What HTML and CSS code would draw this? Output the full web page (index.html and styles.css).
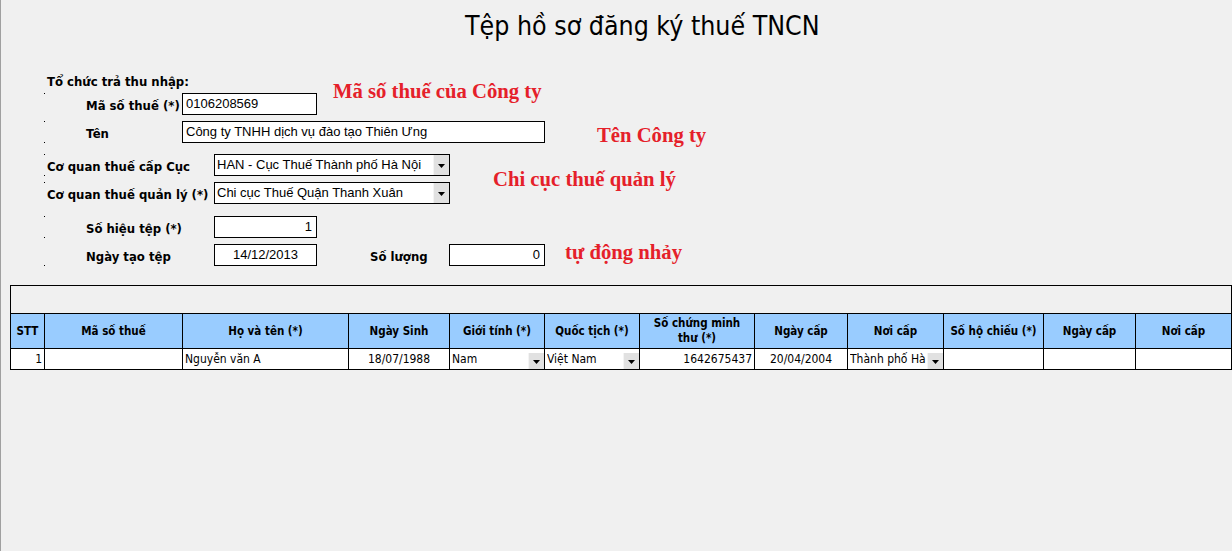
FILE: index.html
```html
<!DOCTYPE html>
<html lang="vi">
<head>
<meta charset="utf-8">
<title>Tệp hồ sơ đăng ký thuế TNCN</title>
<link rel="stylesheet" href="styles.css">
</head>
<body>
<div class="page">
  <h1 class="title">Tệp hồ sơ đăng ký thuế TNCN</h1>

  <div class="form">
    <div class="group-label">Tổ chức trả thu nhập:</div>

    <div class="row row-b dot-top">
      <span class="label sub lw-a">Mã số thuế (*)</span>
      <div class="field fw-mst">0106208569</div>
      <span class="note note-b">Mã số thuế của Công ty</span>
    </div>

    <div class="row row-c dot-top dot-bottom">
      <span class="label sub lw-a">Tên</span>
      <div class="field fw-ten">Công ty TNHH dịch vụ đào tạo Thiên Ưng</div>
      <span class="note note-c">Tên Công ty</span>
    </div>

    <div class="pair">
      <div class="pair-rows">
        <div class="row row-d dot-top dot-bottom">
          <span class="label lw-b">Cơ quan thuế cấp Cục</span>
          <div class="field select fw-sel">
            <span class="val">HAN - Cục Thuế Thành phố Hà Nội</span>
            <span class="btn"><svg width="7" height="4" viewBox="0 0 7 4"><path d="M0 0h7L3.5 4z"/></svg></span>
          </div>
        </div>
        <div class="row row-e dot-top">
          <span class="label lw-b">Cơ quan thuế quản lý (*)</span>
          <div class="field select fw-sel">
            <span class="val">Chi cục Thuế Quận Thanh Xuân</span>
            <span class="btn"><svg width="7" height="4" viewBox="0 0 7 4"><path d="M0 0h7L3.5 4z"/></svg></span>
          </div>
        </div>
      </div>
      <span class="note note-de">Chi cục thuế quản lý</span>
    </div>

    <div class="row row-f dot-top dot-bottom">
      <span class="label sub lw-b">Số hiệu tệp (*)</span>
      <div class="field fw-short right">1</div>
    </div>

    <div class="row row-g dot-bottom">
      <span class="label sub lw-b">Ngày tạo tệp</span>
      <div class="field fw-short center">14/12/2013</div>
      <span class="label lw-sl">Số lượng</span>
      <div class="field fw-sl right">0</div>
      <span class="note note-g">tự động nhảy</span>
    </div>
  </div>

  <div class="grid-box">
    <div class="strip"></div>
    <table class="grid">
      <thead>
        <tr>
          <th class="c1">STT</th>
          <th class="c2">Mã số thuế</th>
          <th class="c3">Họ và tên (*)</th>
          <th class="c4">Ngày Sinh</th>
          <th class="c5">Giới tính (*)</th>
          <th class="c6">Quốc tịch (*)</th>
          <th class="c7">Số chứng minh<br>thư (*)</th>
          <th class="c8">Ngày cấp</th>
          <th class="c9">Nơi cấp</th>
          <th class="c10">Số hộ chiếu (*)</th>
          <th class="c11">Ngày cấp</th>
          <th class="c12">Nơi cấp</th>
        </tr>
      </thead>
      <tbody>
        <tr>
          <td class="right">1</td>
          <td></td>
          <td>Nguyễn văn A</td>
          <td class="center">18/07/1988</td>
          <td><div class="dd"><span class="dd-val">Nam</span><span class="dd-btn"><svg width="7" height="4" viewBox="0 0 7 4"><path d="M0 0h7L3.5 4z"/></svg></span></div></td>
          <td><div class="dd"><span class="dd-val">Việt Nam</span><span class="dd-btn"><svg width="7" height="4" viewBox="0 0 7 4"><path d="M0 0h7L3.5 4z"/></svg></span></div></td>
          <td class="right">1642675437</td>
          <td class="center">20/04/2004</td>
          <td><div class="dd"><span class="dd-val">Thành phố Hà</span><span class="dd-btn"><svg width="7" height="4" viewBox="0 0 7 4"><path d="M0 0h7L3.5 4z"/></svg></span></div></td>
          <td></td>
          <td></td>
          <td></td>
        </tr>
      </tbody>
    </table>
  </div>
</div>
</body>
</html>
```

FILE: styles.css
```css
html, body {
  margin: 0;
  padding: 0;
  background: #f0f0f0;
}

body {
  font-family: "DejaVu Sans Condensed", "DejaVu Sans", sans-serif;
  font-stretch: condensed;
  color: #000;
}

.page {
  box-sizing: border-box;
  min-height: 551px;
  border-left: 1px solid #a0a0a0;
  overflow: hidden;
}

.title {
  margin: 0;
  height: 52px;
  line-height: 52px;
  padding-left: 464px;
  font-size: 26.5px;
  font-weight: normal;
  white-space: nowrap;
}

.form {
  padding: 22px 0 0 46px;
}

.group-label {
  height: 16px;
  line-height: 16px;
  font-size: 13px;
  font-weight: bold;
}

.row {
  position: relative;
  display: flex;
  align-items: center;
  height: 22px;
}

.dot-top::before,
.dot-bottom::after {
  content: "";
  position: absolute;
  left: -3px;
  width: 1px;
  height: 1px;
  background: #000;
}
.dot-top::before { top: 0; }
.dot-bottom::after { bottom: 0; }

.row-b { margin-top: 3px; }
.row-c { margin-top: 6px; }
.pair { margin-top: 11px; display: flex; align-items: center; }
.row-e { margin-top: 6px; }
.row-f { margin-top: 12px; }
.row-g { margin-top: 6px; }

.label {
  flex: none;
  box-sizing: border-box;
  padding-top: 3px;
  font-size: 13px;
  font-weight: bold;
  white-space: nowrap;
}
.sub { padding-left: 39px; }
.lw-a { width: 135px; }
.lw-b { width: 167px; }
.lw-sl { width: 132px; padding-left: 53px; }

.field {
  flex: none;
  box-sizing: border-box;
  height: 22px;
  border: 1px solid #000;
  background: #fff;
  padding: 0 3px;
  font-family: "Liberation Sans", Arial, sans-serif;
  font-stretch: normal;
  font-size: 13px;
  line-height: 20px;
  white-space: nowrap;
  overflow: hidden;
}
.field.right { text-align: right; padding-right: 4px; }
.field.center { text-align: center; }

.fw-mst { width: 135px; }
.fw-ten { width: 363px; }
.fw-sel { width: 236px; }
.fw-short { width: 103px; }
.fw-sl { width: 96px; }

.select {
  display: flex;
  padding: 0 0 0 2px;
}
.select .val {
  flex: 1;
  overflow: hidden;
}
.select .btn,
.dd-btn {
  flex: none;
  display: flex;
  align-items: center;
  justify-content: center;
  width: 16px;
  background: #e1e1e1;
  border-left: 1px solid #f4f4f4;
  box-sizing: border-box;
}
.select .btn svg,
.dd-btn svg { margin-top: 2px; }

.note {
  flex: none;
  font-family: "Liberation Serif", "Times New Roman", serif;
  font-stretch: normal;
  font-size: 20.7px;
  font-weight: bold;
  color: #e5202a;
  line-height: 22px;
  white-space: nowrap;
}
.note-b { margin-left: 16px; align-self: flex-start; margin-top: -13px; }
.note-c { margin-left: 52px; align-self: flex-start; margin-top: 3px; }
.note-de { margin-left: 43px; }
.note-g { margin-left: 20px; align-self: flex-start; margin-top: -3px; }

.grid-box {
  box-sizing: border-box;
  width: 1222px;
  margin: 19px 0 0 9px;
  border: 1px solid #000;
}

.strip {
  height: 27px;
  border-bottom: 1px solid #000;
}

.grid {
  table-layout: fixed;
  border-collapse: separate;
  border-spacing: 0;
  width: 1220px;
  font-size: 12px;
}

.grid th,
.grid td {
  box-sizing: border-box;
  border-right: 1px solid #000;
  padding: 0 2px;
  overflow: hidden;
  white-space: nowrap;
}
.grid th:last-child,
.grid td:last-child { border-right: none; }

.grid th {
  height: 35px;
  background: #99ccff;
  border-bottom: 1px solid #000;
  font-size: 11.5px;
  font-weight: bold;
  line-height: 15px;
  text-align: center;
  vertical-align: middle;
  white-space: nowrap;
}

.grid td {
  height: 20px;
  background: #fff;
  line-height: 20px;
  vertical-align: middle;
}
.grid td.right { text-align: right; }
.grid td.center { text-align: center; }

.c1 { width: 34px; }
.c2 { width: 138px; }
.c3 { width: 166px; }
.c4 { width: 101px; }
.c5 { width: 95px; }
.c6 { width: 95px; }
.c7 { width: 115px; }
.c8 { width: 93px; }
.c9 { width: 96px; }
.c10 { width: 100px; }
.c11 { width: 92px; }
.c12 { width: 95px; }

.grid td:has(.dd) { padding: 0 0 0 2px; }

.dd {
  display: flex;
  align-items: flex-end;
  height: 20px;
}
.dd-val {
  flex: 1;
  overflow: hidden;
  white-space: nowrap;
  align-self: center;
}
.dd-btn {
  height: 16px;
}
```
